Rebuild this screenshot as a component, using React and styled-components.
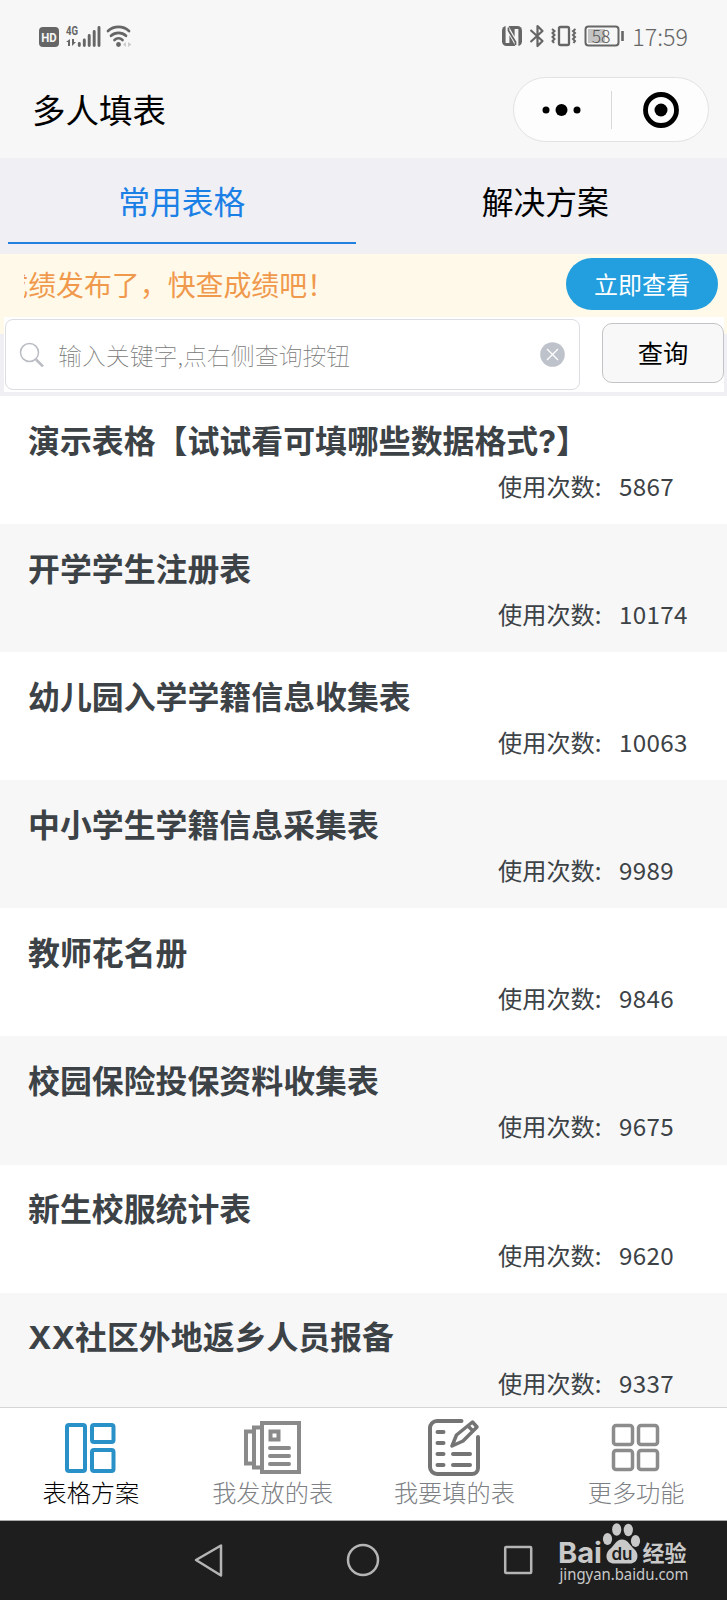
import React from "react";
import styled, { createGlobalStyle } from "styled-components";

const GlobalStyle = createGlobalStyle`
   * {
      box-sizing: border-box;
   }
   body {
      margin: 0;
      background: #efeff4;
      font-family: "Noto Sans CJK SC", sans-serif;
   }
   button {
      font-family: inherit;
      padding: 0;
      border: none;
      background: none;
   }
`;

const forms = [
   { title: "演示表格【试试看可填哪些数据格式?】", count: 5867 },
   { title: "开学学生注册表", count: 10174 },
   { title: "幼儿园入学学籍信息收集表", count: 10063 },
   { title: "中小学生学籍信息采集表", count: 9989 },
   { title: "教师花名册", count: 9846 },
   { title: "校园保险投保资料收集表", count: 9675 },
   { title: "新生校服统计表", count: 9620 },
   { title: "XX社区外地返乡人员报备", count: 9337 },
];

const Screen = styled.div`
   display: flex;
   flex-direction: column;
   width: 727px;
   height: 1600px;
   overflow: hidden;
`;

const Header = styled.header`
   flex: none;
   height: 158px;
   background: #f7f7f7;
`;

const StatusBar = styled.div`
   display: flex;
   justify-content: space-between;
   height: 72px;
   padding: 0 39px;
`;

const StatusSide = styled.div`
   display: flex;
   align-items: center;
`;

const Clock = styled.span`
   margin-left: 8px;
   font-size: 23.3px;
   font-weight: 300;
   line-height: 34px;
   padding-bottom: 1px;
   color: #666;
`;

const TitleBar = styled.div`
   display: flex;
   justify-content: space-between;
   align-items: center;
   height: 75px;
   padding: 0 18px 0 32px;
`;

const AppTitle = styled.h1`
   margin: 0;
   padding-bottom: 1px;
   font-size: 33.5px;
   font-weight: 400;
   line-height: 48px;
   color: #000;
`;

const Capsule = styled.div`
   display: flex;
   align-items: center;
   width: 196px;
   height: 65px;
   border: 1px solid #e2e2e2;
   border-radius: 33px;
   background: #fdfdfd;
`;

const CapsuleButton = styled.button`
   display: flex;
   justify-content: center;
   align-items: center;
   flex: 1;
   height: 100%;
`;

const CapsuleLine = styled.span`
   width: 1px;
   height: 38px;
   background: #d8d8d8;
`;

const Tabs = styled.nav`
   display: flex;
   flex: none;
   height: 96px;
   padding-bottom: 10px;
`;

const Tab = styled.button`
   flex: 1;
   margin: 0 8px;
   border-bottom: 2px solid ${(props) => (props.$active ? "#2480de" : "transparent")};
   font-size: 31.8px;
   line-height: 84px;
   color: ${(props) => (props.$active ? "#1a80e6" : "#000")};
`;

const Notice = styled.div`
   display: flex;
   flex: none;
   justify-content: space-between;
   align-items: flex-start;
   height: 80px;
   padding: 4px 9px 0 24px;
   background: #fff9e9;
`;

const Marquee = styled.div`
   display: flex;
   justify-content: flex-end;
   width: 311px;
   overflow: hidden;
   font-size: 27.9px;
   line-height: 52px;
   white-space: nowrap;
   color: #f0994d;
`;

const CheckButton = styled.button`
   width: 152px;
   height: 52px;
   padding-bottom: 2px;
   border-radius: 26px;
   font-size: 24px;
   color: #fff;
   background: #239ede;
`;

const SearchBar = styled.div`
   display: flex;
   flex: none;
   justify-content: space-between;
   height: 75px;
   margin: -17px 3px 4px 4px;
   padding-top: 2px;
   background: #fff;
`;

const SearchBox = styled.div`
   display: flex;
   align-items: center;
   width: 575px;
   height: 71px;
   margin-left: 1px;
   padding: 0 14px 0 13px;
   border: 1px solid #dcdde1;
   border-radius: 8px;
   background: #fff;
`;

const Placeholder = styled.span`
   flex: 1;
   margin-left: 14px;
   font-size: 23.9px;
   font-weight: 100;
   line-height: 36px;
   color: #777;
`;

const QueryButton = styled.button`
   width: 122px;
   height: 60px;
   margin-top: 4px;
   padding-bottom: 2px;
   border: 1px solid #c4c4c8;
   border-radius: 10px;
   font-size: 25.3px;
   color: #000;
   background: #f8f8f8;
`;

const FormList = styled.main`
   flex: 1;
   min-height: 0;
   overflow: hidden;
`;

const FormRow = styled.div`
   display: flex;
   flex-direction: column;
   height: 128.1px;
   padding: 21.5px 28px 0;
   background: #fff;

   &:nth-child(even) {
      background: #f7f7f8;
   }
`;

const FormTitle = styled.h2`
   margin: 0;
   font-family: Inter, "Noto Sans CJK SC", sans-serif;
   font-size: 31.9px;
   font-weight: 700;
   line-height: 48px;
   color: #3c4246;
`;

const FormUsage = styled.div`
   display: flex;
   padding: 2.5px 0 0 470px;
   font-size: 24.2px;
   line-height: 36px;
   white-space: nowrap;
   color: #3c4246;
`;

const UsageLabel = styled.span`
   width: 121px;
`;

const UsageCount = styled.span`
   letter-spacing: 0.3px;
`;

const BottomNav = styled.nav`
   display: flex;
   flex: none;
   height: 114px;
   border-top: 1px solid #d5d5d5;
   border-bottom: 1px solid #aaa;
   background: #fff;
`;

const NavItem = styled.button`
   display: flex;
   flex: 1;
   flex-direction: column;
   align-items: center;
   justify-content: flex-start;
   padding-top: 8px;
   font-size: 24.2px;
   font-weight: 300;
   line-height: 31px;
   color: ${(props) => (props.$active ? "#000" : "#7d8084")};
`;

const SystemNav = styled.footer`
   display: flex;
   flex: none;
   align-items: center;
   height: 79px;
   padding-left: 193px;
   background: #1e1e1e;
`;

const SystemKeys = styled.div`
   display: flex;
   gap: 121px;
   padding-bottom: 2px;
`;

const Watermark = styled.div`
   margin-left: 24px;
   height: 79px;
`;

function SignalIcons() {
   return (
      <svg width="94" height="26" viewBox="0 0 94 26" fill="#666">
         <rect x="0" y="4" width="20" height="20" rx="4" />
         <text x="10" y="18.5" fontFamily="Roboto" fontSize="12" fontWeight="700" textAnchor="middle" textLength="15.5" lengthAdjust="spacingAndGlyphs" fill="#f7f7f7">HD</text>
         <text x="27" y="12" fontFamily="Roboto" fontSize="12" fontWeight="700" textLength="12" lengthAdjust="spacingAndGlyphs">4G</text>
         <path d="M27 19l4-3v7h-2v-4zM33 16v7l4-4h-2v-3z" />
         <path d="M40.3 20.5v2M45.3 17v5.500M50.200 12.500v10M55.200 8.500v14M60 4.500v18" stroke="#666" strokeWidth="2.900" strokeLinecap="round" />
         <g fill="none" stroke="#666" strokeWidth="2.700" strokeLinecap="round">
            <path d="M69 8a15.500 15.500 0 0 1 21 0M72 12.800a11 11 0 0 1 15 0M75.500 17a6 6 0 0 1 8 0" />
         </g>
         <circle cx="79.500" cy="21.500" r="2.400" />
         <path d="M87 19v5l-3-2.500zM89 19v5l3.500-2.500z" fill="#ccc" />
      </svg>
   );
}

function DeviceIcons() {
   return (
      <svg width="122" height="26" viewBox="0 0 122 26" fill="none" stroke="#666" strokeWidth="2">
         <rect x="0" y="3" width="20" height="20" rx="4.500" fill="#666" stroke="none" />
         <path d="M5.500 20V5l9 16V6" stroke="#f7f7f7" strokeWidth="3.800" />
         <path d="M6.500 4.500v3l7 11.500v3" strokeWidth="1.800" />
         <path d="M28.500 7l12 11-5 5V3l5 5-12 11" strokeWidth="2.200" strokeLinejoin="round" />
         <rect x="57" y="4" width="10" height="18" rx="1.500" strokeWidth="2.300" />
         <path d="M50 6l2.500 2-2 2 2 2-2 2 2 2-2 2 1.500 2M73.500 6l-2.500 2 2 2-2 2 2 2-2 2 2 2-1.500 2" />
         <rect x="83.500" y="3.500" width="33" height="19" rx="3" />
         <rect x="86" y="6" width="17" height="14" fill="#c4c4c4" stroke="none" />
         <path d="M120.500 8v10" strokeWidth="2.600" />
         <text x="99" y="19.5" fontSize="17.500" fontWeight="300" textAnchor="middle" fill="#555" stroke="none">58</text>
      </svg>
   );
}

function PlansIcon() {
   return (
      <svg width="58" height="60" viewBox="0 0 58 60" fill="none" stroke="#2991c8" strokeWidth="4">
         <rect x="5" y="9" width="18" height="46" rx="2" />
         <rect x="30" y="9" width="21.500" height="17" rx="2" />
         <rect x="30" y="34" width="21.500" height="21" rx="2" />
      </svg>
   );
}

function PublishedIcon() {
   return (
      <svg width="58" height="60" viewBox="0 0 58 60" fill="none" stroke="#8a8a8a" strokeWidth="4">
         <rect x="18" y="7" width="37" height="49" />
         <path d="M18 11.500H10v40h8M10 15.500H2v32h8" />
         <rect x="26.500" y="15.500" width="8" height="8" />
         <path d="M26 32h19M26 40h19M26 48h19" strokeLinecap="round" />
      </svg>
   );
}

function FillIcon() {
   return (
      <svg width="58" height="60" viewBox="0 0 58 60" fill="none" stroke="#747474" strokeWidth="4" strokeLinecap="round">
         <path d="M36.500 5H12a7 7 0 0 0-7 7v39a7 7 0 0 0 7 7h35a6 6 0 0 0 6-6V21" />
         <path d="M12.500 16h6M12.500 27h6M12.500 38h6M12.500 49h6M28 38h17M28 49h17" />
         <path d="M27 30l4.500-11L47.500 6l4.500 5-14 14zM43 10l5 5" strokeWidth="3.500" strokeLinejoin="round" />
      </svg>
   );
}

function MoreIcon() {
   return (
      <svg width="58" height="60" viewBox="0 0 58 60" fill="none" stroke="#8c8c8c" strokeWidth="3.500">
         <rect x="6.500" y="9.500" width="19" height="19" rx="2.500" />
         <rect x="31.500" y="9.500" width="19" height="19" rx="2.500" />
         <rect x="6.500" y="34.500" width="19" height="19" rx="2.500" />
         <rect x="31.500" y="34.500" width="19" height="19" rx="2.500" />
      </svg>
   );
}

function BaiduMark() {
   return (
      <svg width="140" height="79" viewBox="0 0 140 79" fill="#c9c9c9">
         <text x="1" y="41.5" fontFamily="Inter" fontSize="29" fontWeight="700" textLength="44" lengthAdjust="spacingAndGlyphs">Bai</text>
         <ellipse cx="50.500" cy="18" rx="4.600" ry="6" />
         <ellipse cx="59.700" cy="8.500" rx="4.600" ry="6.200" />
         <ellipse cx="71.300" cy="9" rx="4.600" ry="6.200" />
         <ellipse cx="78.500" cy="20" rx="4.600" ry="6" />
         <path d="M65 18.500c6 0 8 6 12 9.500 6 5 4 14.500-4 14.500H57c-8 0-10-9.500-4-14.500 5-4 6-9.500 12-9.500z" />
         <text x="65" y="38.500" fontFamily="Inter" fontSize="17" fontWeight="600" textAnchor="middle" fill="#1e1e1e">du</text>
         <text x="85.500" y="39.500" fontSize="22" fontWeight="700">经验</text>
         <text x="2.500" y="59" fontFamily="Noto Sans" fontSize="15.500" textLength="129" lengthAdjust="spacingAndGlyphs">jingyan.baidu.com</text>
      </svg>
   );
}

const navItems = [
   { label: "表格方案", Icon: PlansIcon },
   { label: "我发放的表", Icon: PublishedIcon },
   { label: "我要填的表", Icon: FillIcon },
   { label: "更多功能", Icon: MoreIcon },
];

export default function App() {
   return (
      <Screen>
         <GlobalStyle />
         <Header>
            <StatusBar>
               <StatusSide>
                  <SignalIcons />
               </StatusSide>
               <StatusSide>
                  <DeviceIcons />
                  <Clock>17:59</Clock>
               </StatusSide>
            </StatusBar>
            <TitleBar>
               <AppTitle>多人填表</AppTitle>
               <Capsule>
                  <CapsuleButton>
                     <svg width="40" height="14">
                        <circle cx="4" cy="7" r="3.500" />
                        <circle cx="19.500" cy="7" r="6" />
                        <circle cx="35" cy="7" r="3.500" />
                     </svg>
                  </CapsuleButton>
                  <CapsuleLine />
                  <CapsuleButton>
                     <svg width="38" height="38">
                        <circle cx="20" cy="19" r="15.500" fill="none" stroke="#000" strokeWidth="4.800" />
                        <circle cx="20" cy="19" r="6.500" />
                     </svg>
                  </CapsuleButton>
               </Capsule>
            </TitleBar>
         </Header>

         <Tabs>
            <Tab $active>常用表格</Tab>
            <Tab>解决方案</Tab>
         </Tabs>

         <Notice>
            <Marquee>成绩发布了，快查成绩吧！</Marquee>
            <CheckButton>立即查看</CheckButton>
         </Notice>

         <SearchBar>
            <SearchBox>
               <svg width="25" height="25" fill="none" stroke="#b9bcc3">
                  <circle cx="10.500" cy="10.500" r="9" strokeWidth="1.500" />
                  <path d="M17 17.500l7 7" strokeWidth="2.500" />
               </svg>
               <Placeholder>输入关键字,点右侧查询按钮</Placeholder>
               <svg width="25" height="25">
                  <circle cx="12.500" cy="12.500" r="12.300" fill="#bec2ca" />
                  <path d="M7 7l11 11M18 7L7 18" stroke="#fff" strokeWidth="1.300" />
               </svg>
            </SearchBox>
            <QueryButton>查询</QueryButton>
         </SearchBar>

         <FormList>
            {forms.map((form) => (
               <FormRow key={form.title}>
                  <FormTitle>{form.title}</FormTitle>
                  <FormUsage>
                     <UsageLabel>使用次数:</UsageLabel>
                     <UsageCount>{form.count}</UsageCount>
                  </FormUsage>
               </FormRow>
            ))}
         </FormList>

         <BottomNav>
            {navItems.map(({ label, Icon }, index) => (
               <NavItem key={label} $active={index === 0}>
                  <Icon />
                  {label}
               </NavItem>
            ))}
         </BottomNav>

         <SystemNav>
            <SystemKeys>
               <svg width="32" height="36" fill="none" stroke="#b5b5b5" strokeWidth="2.500">
                  <path d="M3 18L28 3.500v30z" strokeLinejoin="round" />
               </svg>
               <svg width="34" height="36" fill="none" stroke="#b5b5b5" strokeWidth="2.500">
                  <circle cx="17" cy="18" r="15" />
               </svg>
               <svg width="32" height="36" fill="none" stroke="#b5b5b5" strokeWidth="2.500">
                  <rect x="4.200" y="5" width="26" height="26" rx="1" />
               </svg>
            </SystemKeys>
            <Watermark>
               <BaiduMark />
            </Watermark>
         </SystemNav>
      </Screen>
   );
}
